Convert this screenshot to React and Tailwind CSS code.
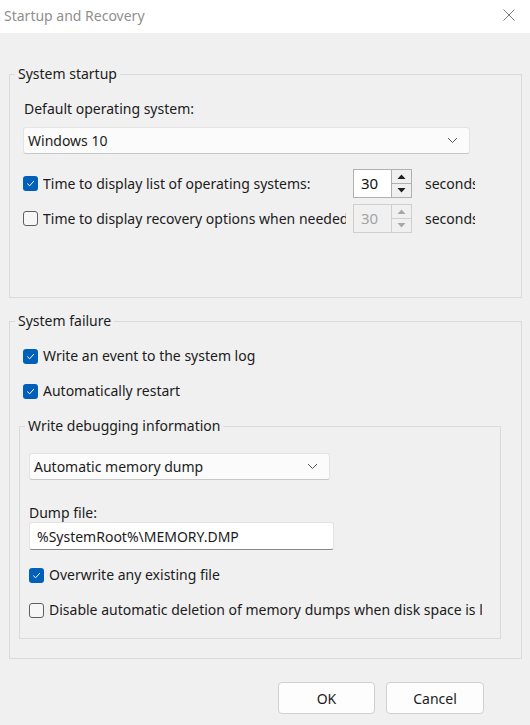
import React from 'react';

const font = { fontFamily: '"Noto Sans", "Open Sans", sans-serif' };

function Check({ checked }) {
  if (checked) {
    return (
      <span className="flex h-[15px] w-[15px] shrink-0 items-center justify-center rounded-[3px] bg-[#005fb8]">
        <svg width="9" height="9" viewBox="0 0 9 9" fill="none">
          <path d="M1.5 4.8 L3.6 6.8 L7.6 2.4" stroke="#fff" strokeWidth="1" strokeLinecap="round" strokeLinejoin="round" />
        </svg>
      </span>
    );
  }
  return <span className="h-[15px] w-[15px] shrink-0 rounded-[3px] border border-[#5f5f5f] bg-[#f6f6f6]" />;
}

function CheckRow({ checked, label, className = '' }) {
  return (
    <div className={`flex h-5 items-center gap-[5px] ${className}`}>
      <Check checked={checked} />
      <span className="whitespace-nowrap text-[14px] leading-5 text-[#1b1b1b]">{label}</span>
    </div>
  );
}

function Chevron() {
  return (
    <svg width="11" height="7" viewBox="0 0 11 7" fill="none">
      <path d="M1 1 L5.5 5.5 L10 1" stroke="#5a5a5a" strokeWidth="1" />
    </svg>
  );
}

function Select({ value, className = '' }) {
  return (
    <div className={`flex h-[27px] items-center justify-between rounded-[3px] border border-[#e3e3e3] border-b-[#c8c8c8] bg-[#fbfbfb] pl-[4px] pr-[11px] ${className}`}>
      <span className="text-[14px] leading-5 text-[#1b1b1b]">{value}</span>
      <Chevron />
    </div>
  );
}

function Arrow({ up, color }) {
  return (
    <svg width="9" height="5" viewBox="0 0 9 5">
      <path d={up ? 'M0.5 5 L4.5 0.5 L8.5 5 Z' : 'M0.5 0 L4.5 4.5 L8.5 0 Z'} fill={color} />
    </svg>
  );
}

function Spin({ disabled }) {
  const border = disabled ? 'border-[#cfcfcf]' : 'border-[#b0b0b0]';
  const arrow = disabled ? '#a8a8a8' : '#1f1f1f';
  return (
    <div className={`flex h-[29px] w-[59px] shrink-0 border ${border} ${disabled ? 'bg-[#f0f0f0]' : 'bg-white'}`}>
      <div className={`flex flex-1 items-center pl-[7px] text-[15px] ${disabled ? 'text-[#a3a3a3]' : 'text-[#111]'}`}>30</div>
      <div className={`flex w-[20px] flex-col border-l ${border} bg-[#f0f0f0]`}>
        <div className={`flex flex-1 items-center justify-center border-b ${border}`}>
          <Arrow up color={arrow} />
        </div>
        <div className="flex flex-1 items-center justify-center">
          <Arrow color={arrow} />
        </div>
      </div>
    </div>
  );
}

function SpinRow({ checked, label, disabled, className = '' }) {
  return (
    <div className={`flex h-[29px] items-center ${className}`}>
      <Check checked={checked} />
      <span className="ml-[5px] w-[303px] overflow-hidden whitespace-nowrap text-[14px] leading-5 text-[#1b1b1b]">{label}</span>
      <div className="ml-[7px]">
        <Spin disabled={disabled} />
      </div>
      <span className="ml-[13px] w-[50px] overflow-hidden whitespace-nowrap text-[14px] leading-5 text-[#1b1b1b]">seconds</span>
    </div>
  );
}

function Group({ title, className = '', children }) {
  return (
    <fieldset className={`border border-[#dadada] ${className}`}>
      <legend className="ml-[5px] px-[3px] text-[14px] leading-5 text-[#1b1b1b]">{title}</legend>
      {children}
    </fieldset>
  );
}

export default function App() {
  return (
    <div className="h-[725px] w-[530px] overflow-hidden bg-[#f0f0f0]" style={font}>
      <div className="flex h-[33px] items-center justify-between bg-white pb-[3px] pl-[4px] pr-[15px]">
        <span className="text-[14px] text-[#8f8f8f]">Startup and Recovery</span>
        <svg width="12" height="12" viewBox="0 0 12 12">
          <path d="M0.5 0.5 L11.5 11.5 M11.5 0.5 L0.5 11.5" stroke="#7a7a7a" strokeWidth="1" />
        </svg>
      </div>

      <Group title="System startup" className="ml-[9px] mt-[31px] w-[513px]">
        <div className="pb-[64px] pl-[13px]">
          <div className="mt-[15px] pl-px text-[14px] leading-5 text-[#1b1b1b]">Default operating system:</div>
          <Select value="Windows 10" className="mt-[8px] w-[447px]" />
          <SpinRow checked label="Time to display list of operating systems:" className="mt-[15px]" />
          <SpinRow label="Time to display recovery options when needed:" disabled className="mt-[6px]" />
        </div>
      </Group>

      <Group title="System failure" className="ml-[9px] mt-[13px] w-[513px]">
        <div className="pb-[19px] pl-[13px]">
          <CheckRow checked label="Write an event to the system log" className="mt-[15px]" />
          <CheckRow checked label="Automatically restart" className="mt-[15px]" />
          <Group title="Write debugging information" className="-ml-[4px] mt-[15px] w-[482px]">
            <div className="pb-[18px] pl-[9px]">
              <Select value="Automatic memory dump" className="mt-[17px] w-[301px]" />
              <div className="mt-[24px] text-[14px] leading-[18px] text-[#1b1b1b]">Dump file:</div>
              <div className="flex h-[28px] w-[305px] items-center rounded-[3px] border border-[#e3e3e3] border-b-[#8a8a8a] bg-white pl-[7px] text-[14px] text-[#1b1b1b]">
                %SystemRoot%\MEMORY.DMP
              </div>
              <CheckRow checked label="Overwrite any existing file" className="mt-[15px]" />
              <div className="mt-[15px] w-[453px] overflow-hidden">
                <CheckRow label="Disable automatic deletion of memory dumps when disk space is low" />
              </div>
            </div>
          </Group>
        </div>
      </Group>

      <div className="mr-[46px] mt-[23px] flex justify-end gap-[11px]">
        <button className="h-[32px] w-[97px] rounded-[4px] border border-[#d0d0d0] bg-[#fdfdfd] text-[14px] text-[#1b1b1b]">OK</button>
        <button className="h-[32px] w-[98px] rounded-[4px] border border-[#d0d0d0] bg-[#fdfdfd] text-[14px] text-[#1b1b1b]">Cancel</button>
      </div>
    </div>
  );
}
